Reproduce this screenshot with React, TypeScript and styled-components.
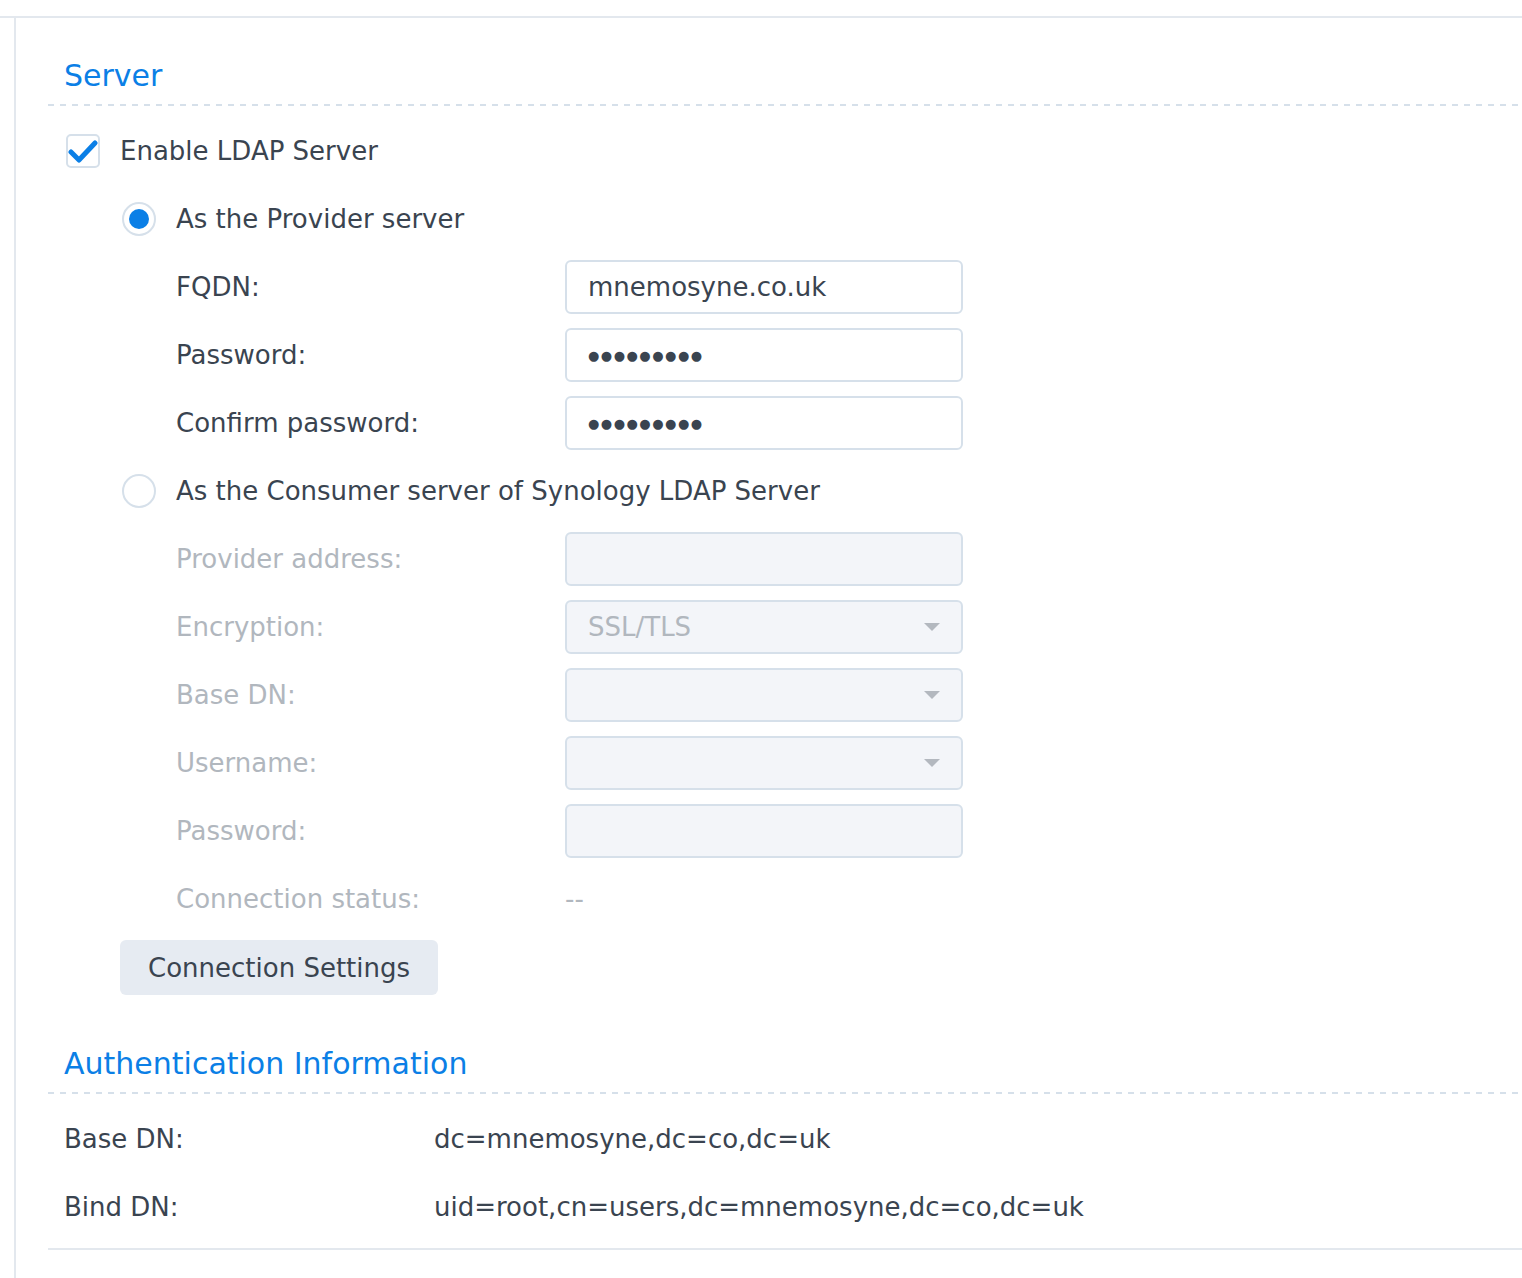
import React from "react";
import styled, { createGlobalStyle } from "styled-components";

const GlobalStyle = createGlobalStyle`
  html, body {
    margin: 0;
    padding: 0;
    background: #ffffff;
  }
  body {
    font-family: "DejaVu Sans", Verdana, sans-serif;
    font-size: 26px;
    color: #3a4450;
  }
  * {
    box-sizing: border-box;
  }
`;

const BLUE = "#0b7fe6";
const LINE = "#e3e8ee";
const BORDER = "#d6e0ea";
const MUTED = "#b1b7be";

const Page = styled.div`
  padding-top: 16px;
  height: 100vh;
  overflow: hidden;
`;

const Frame = styled.div`
  display: flex;
  height: 100%;
  padding-left: 14px;
  border-top: 2px solid ${LINE};
`;

const Panel = styled.div`
  flex: 1;
  padding: 38px 0 0 32px;
  border-left: 2px solid ${LINE};
`;

const SectionTitle = styled.h2<{ $top?: number }>`
  margin: ${(p) => p.$top ?? 0}px 0 0;
  padding: 0 0 10px 16px;
  font-size: 30px;
  font-weight: normal;
  line-height: 40px;
  color: ${BLUE};
  background: repeating-linear-gradient(
      to right,
      #d6e0ea 0 6px,
      transparent 6px 12px
    )
    left bottom / 100% 2px no-repeat;
`;

const Form = styled.div`
  padding: 18px 0 0 18px;
`;

const Row = styled.div<{ $indent?: number }>`
  display: flex;
  align-items: center;
  min-height: 54px;
  margin-bottom: 14px;
  padding-left: ${(p) => p.$indent ?? 0}px;
`;

const CheckBox = styled.span`
  display: flex;
  align-items: center;
  justify-content: center;
  width: 34px;
  height: 34px;
  margin-right: 20px;
  border: 2px solid ${BORDER};
  border-radius: 5px;
  background: #fff;
`;

const Radio = styled.span<{ $checked?: boolean }>`
  display: flex;
  align-items: center;
  justify-content: center;
  width: 34px;
  height: 34px;
  margin-right: 20px;
  border: 2px solid ${BORDER};
  border-radius: 50%;
  background: #fff;

  &::after {
    content: "";
    display: ${(p) => (p.$checked ? "block" : "none")};
    width: 20px;
    height: 20px;
    border-radius: 50%;
    background: ${BLUE};
  }
`;

const OptionText = styled.span`
  line-height: 34px;
`;

const Label = styled.span<{ $disabled?: boolean }>`
  width: 389px;
  color: ${(p) => (p.$disabled ? MUTED : "#3a4450")};
`;

const Field = styled.div<{ $disabled?: boolean }>`
  display: flex;
  align-items: center;
  justify-content: space-between;
  width: 398px;
  height: 54px;
  padding: 0 20px 0 21px;
  border: 2px solid ${BORDER};
  border-radius: 6px;
  background: ${(p) => (p.$disabled ? "#f3f5f9" : "#ffffff")};
  color: ${(p) => (p.$disabled ? MUTED : "#3a4450")};
`;

const Dots = styled.span`
  font-size: 13px;
  letter-spacing: 1.5px;
  color: #3a4450;
`;

const Caret = styled.span`
  width: 0;
  height: 0;
  border-left: 8px solid transparent;
  border-right: 8px solid transparent;
  border-top: 8px solid #b3b8bf;
  margin-left: auto;
  margin-right: 1px;
`;

const Status = styled.span`
  color: ${MUTED};
`;

const Button = styled.button`
  height: 55px;
  padding: 0 28px;
  border: none;
  border-radius: 6px;
  background: #e6ebf2;
  font-family: inherit;
  font-size: 26px;
  color: #3a4450;
  cursor: pointer;
`;

const InfoList = styled.div`
  padding: 18px 0 0 16px;
  border-bottom: 2px solid ${LINE};
`;

const InfoLabel = styled.span`
  width: 370px;
`;

const CheckIcon = () => (
  <svg width="30" height="24" viewBox="0 0 30 24">
    <path
      d="M3 13 L11 21 L27 4"
      fill="none"
      stroke={BLUE}
      strokeWidth="5"
      strokeLinecap="round"
      strokeLinejoin="round"
    />
  </svg>
);

type FormField = {
  label: string;
  value?: string;
  secret?: boolean;
  select?: boolean;
};

const providerFields: FormField[] = [
  { label: "FQDN:", value: "mnemosyne.co.uk" },
  { label: "Password:", value: "●●●●●●●●●", secret: true },
  { label: "Confirm password:", value: "●●●●●●●●●", secret: true },
];

const consumerFields: FormField[] = [
  { label: "Provider address:" },
  { label: "Encryption:", value: "SSL/TLS", select: true },
  { label: "Base DN:", select: true },
  { label: "Username:", select: true },
  { label: "Password:" },
];

function FieldRow({ field, disabled }: { field: FormField; disabled?: boolean }) {
  return (
    <Row $indent={110}>
      <Label $disabled={disabled}>{field.label}</Label>
      <Field $disabled={disabled}>
        {field.secret ? <Dots>{field.value}</Dots> : <span>{field.value}</span>}
        {field.select && <Caret />}
      </Field>
    </Row>
  );
}

export default function App() {
  return (
    <Page>
      <GlobalStyle />
      <Frame>
        <Panel>
          <SectionTitle>Server</SectionTitle>
          <Form>
            <Row>
              <CheckBox>
                <CheckIcon />
              </CheckBox>
              <OptionText>Enable LDAP Server</OptionText>
            </Row>
            <Row $indent={56}>
              <Radio $checked />
              <OptionText>As the Provider server</OptionText>
            </Row>
            {providerFields.map((f) => (
              <FieldRow key={f.label} field={f} />
            ))}
            <Row $indent={56}>
              <Radio />
              <OptionText>As the Consumer server of Synology LDAP Server</OptionText>
            </Row>
            {consumerFields.map((f) => (
              <FieldRow key={f.label} field={f} disabled />
            ))}
            <Row $indent={110}>
              <Label $disabled>Connection status:</Label>
              <Status>--</Status>
            </Row>
            <Row $indent={54}>
              <Button>Connection Settings</Button>
            </Row>
          </Form>

          <SectionTitle $top={49}>Authentication Information</SectionTitle>
          <InfoList>
            <Row>
              <InfoLabel>Base DN:</InfoLabel>
              <span>dc=mnemosyne,dc=co,dc=uk</span>
            </Row>
            <Row>
              <InfoLabel>Bind DN:</InfoLabel>
              <span>uid=root,cn=users,dc=mnemosyne,dc=co,dc=uk</span>
            </Row>
          </InfoList>
        </Panel>
      </Frame>
    </Page>
  );
}
